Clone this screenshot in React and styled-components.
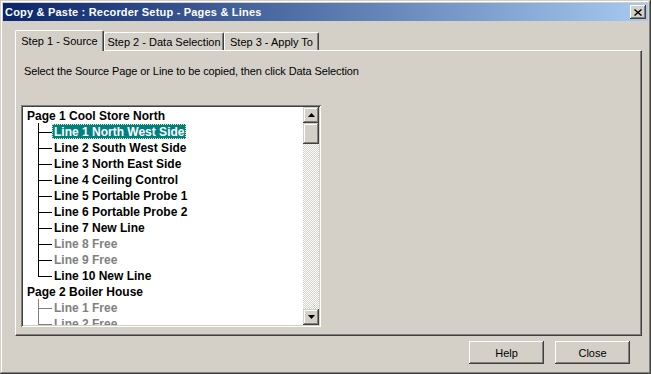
import React from 'react'
import styled, { createGlobalStyle } from 'styled-components'

const GlobalStyle = createGlobalStyle`
  body {
    margin: 0;
    background: #d4d0c8;
  }
`

const Window = styled.div`
  width: 651px;
  height: 374px;
  box-sizing: border-box;
  padding: 3px;
  display: flex;
  flex-direction: column;
  background: #d4d0c8;
  box-shadow: inset -1px -1px #404040, inset 1px 1px #d4d0c8,
    inset -2px -2px #808080, inset 2px 2px #ffffff;
  font-family: "Liberation Sans", Arial, sans-serif;
  font-size: 11px;
  color: #000;
`

const TitleBar = styled.div`
  height: 18px;
  display: flex;
  align-items: center;
  justify-content: space-between;
  padding: 0 2px 0 2px;
  background: linear-gradient(to right, #0a246a, #a6caf0);
  color: #fff;
  font-weight: bold;
  font-size: 11px;
  letter-spacing: 0.2px;
`

const CloseBox = styled.div`
  width: 16px;
  height: 14px;
  box-sizing: border-box;
  background: #d4d0c8;
  box-shadow: inset -1px -1px #404040, inset 1px 1px #ffffff,
    inset -2px -2px #808080;
  display: flex;
  align-items: center;
  justify-content: center;
`

const Body = styled.div`
  flex: 1;
  padding: 9px 6px 0 12px;
  display: flex;
  flex-direction: column;
`

const TabStrip = styled.div`
  display: flex;
  align-items: flex-end;
  height: 20px;
`

const Tab = styled.div`
  position: relative;
  box-sizing: border-box;
  width: ${p => p.w}px;
  height: ${p => (p.active ? 21 : 18)}px;
  margin-bottom: ${p => (p.active ? -1 : 0)}px;
  z-index: ${p => (p.active ? 1 : 0)};
  background: #d4d0c8;
  border-top: 1px solid #fff;
  border-left: 1px solid #fff;
  border-right: 1px solid #404040;
  border-radius: 2px 2px 0 0;
  box-shadow: inset -1px 0 #808080;
  display: flex;
  justify-content: center;
  padding-top: ${p => (p.active ? 3 : 2)}px;
  line-height: 14px;
  white-space: nowrap;
`

const Panel = styled.div`
  width: 627px;
  height: 286px;
  box-sizing: border-box;
  border-top: 1px solid #fff;
  border-left: 1px solid #fff;
  border-right: 1px solid #404040;
  border-bottom: 1px solid #404040;
  box-shadow: inset -1px -1px #808080;
  padding: 0 5px;
  display: flex;
  flex-direction: column;
`

const Description = styled.div`
  margin: 14px 0 0 3px;
  line-height: 13px;
  letter-spacing: -0.1px;
`

const TreeBox = styled.div`
  margin-top: 27px;
  width: 300px;
  height: 222px;
  box-sizing: border-box;
  padding: 2px;
  background: #fff;
  box-shadow: inset 1px 1px #808080, inset -1px -1px #ffffff,
    inset 2px 2px #404040, inset -2px -2px #d4d0c8;
  display: flex;
`

const TreeList = styled.div`
  flex: 1;
  overflow: hidden;
  font-size: 12px;
  font-weight: bold;
`

const Row = styled.div`
  height: 16px;
  display: flex;
  align-items: flex-start;
  padding-left: ${p => (p.page ? 2 : 0)}px;
`

const Connector = styled.span`
  position: relative;
  width: 29px;
  height: 16px;
  flex-shrink: 0;
  &::before {
    content: '';
    position: absolute;
    left: 15px;
    top: 0;
    width: 1px;
    height: ${p => (p.last ? 10 : 16)}px;
    background: ${p => p.color};
  }
  &::after {
    content: '';
    position: absolute;
    left: 15px;
    top: 9px;
    width: 14px;
    height: 1px;
    background: ${p => p.color};
  }
`

const Label = styled.span`
  margin-top: 1px;
  height: 15px;
  line-height: 17px;
  box-sizing: border-box;
  padding: 0 2px;
  white-space: nowrap;
  color: ${p => (p.selected ? '#fff' : p.free ? '#808080' : '#000')};
  background: ${p => (p.selected ? '#008080' : 'transparent')};
  outline: ${p => (p.selected ? '1px dotted #e6e6a0' : 'none')};
  outline-offset: -1px;
`

const ScrollBar = styled.div`
  width: 16px;
  display: flex;
  flex-direction: column;
  background: repeating-conic-gradient(#d4d0c8 0 25%, #ffffff 0 50%) 0 0 / 2px 2px;
`

const ScrollButton = styled.div`
  width: 16px;
  height: ${p => p.h || 16}px;
  box-sizing: border-box;
  flex-shrink: 0;
  background: #d4d0c8;
  box-shadow: inset -1px -1px #404040, inset 1px 1px #d4d0c8,
    inset -2px -2px #808080, inset 2px 2px #ffffff;
  display: flex;
  align-items: center;
  justify-content: center;
`

const Track = styled.div`
  flex: 1;
`

const ButtonRow = styled.div`
  display: flex;
  justify-content: flex-end;
  gap: 11px;
  margin: 5px 12px 0 0;
`

const Button = styled.button`
  width: 75px;
  height: 23px;
  box-sizing: border-box;
  border: none;
  background: #d4d0c8;
  box-shadow: inset -1px -1px #404040, inset 1px 1px #ffffff,
    inset -2px -2px #808080, inset 2px 2px #d4d0c8;
  font-family: "Liberation Sans", Arial, sans-serif;
  font-size: 11px;
  color: #000;
  padding: 0;
`

const Arrow = ({ down }) => (
  <svg width="7" height="4" viewBox="0 0 7 4">
    <path d={down ? 'M0 0h7L3.5 4z' : 'M0 4h7L3.5 0z'} fill="#000" />
  </svg>
)

const tree = [
  { page: true, label: 'Page 1 Cool Store North' },
  { label: 'Line 1 North West Side', selected: true },
  { label: 'Line 2 South West Side' },
  { label: 'Line 3 North East Side' },
  { label: 'Line 4 Ceiling Control' },
  { label: 'Line 5 Portable Probe 1' },
  { label: 'Line 6 Portable Probe 2' },
  { label: 'Line 7 New Line' },
  { label: 'Line 8 Free', free: true },
  { label: 'Line 9 Free', free: true },
  { label: 'Line 10 New Line', last: true },
  { page: true, label: 'Page 2 Boiler House' },
  { label: 'Line 1 Free', free: true, gray: true },
  { label: 'Line 2 Free', free: true, gray: true },
]

const App = () => {
  return (
    <Window>
      <GlobalStyle />
      <TitleBar>
        <span>Copy &amp; Paste : Recorder Setup - Pages &amp; Lines</span>
        <CloseBox>
          <svg width="8" height="7" viewBox="0 0 8 7">
            <path d="M0.5 0.5l7 6M7.5 0.5l-7 6" stroke="#000" strokeWidth="1.4" />
          </svg>
        </CloseBox>
      </TitleBar>
      <Body>
        <TabStrip>
          <Tab w={89} active>Step 1 - Source</Tab>
          <Tab w={120}>Step 2 - Data Selection</Tab>
          <Tab w={95}>Step 3 - Apply To</Tab>
        </TabStrip>
        <Panel>
          <Description>
            Select the Source Page or Line to be copied, then click Data Selection
          </Description>
          <TreeBox>
            <TreeList>
              {tree.map((r, i) => (
                <Row key={i} page={r.page}>
                  {!r.page && (
                    <Connector last={r.last} color={r.gray ? '#808080' : '#000'} />
                  )}
                  <Label selected={r.selected} free={r.free}>
                    {r.label}
                  </Label>
                </Row>
              ))}
            </TreeList>
            <ScrollBar>
              <ScrollButton>
                <Arrow />
              </ScrollButton>
              <ScrollButton h={21} />
              <Track />
              <ScrollButton>
                <Arrow down />
              </ScrollButton>
            </ScrollBar>
          </TreeBox>
        </Panel>
        <ButtonRow>
          <Button>Help</Button>
          <Button>Close</Button>
        </ButtonRow>
      </Body>
    </Window>
  )
}

export default App
